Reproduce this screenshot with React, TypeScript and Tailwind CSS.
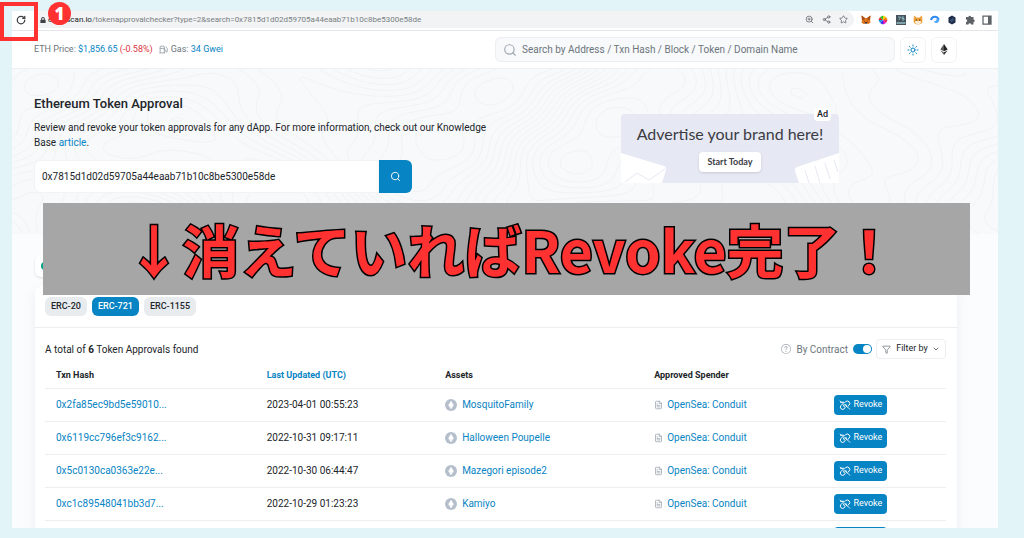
import { ChevronDown, FileText, Filter, Fuel, RotateCw, Search, Share2, Star, Sun, ZoomIn } from 'lucide-react';
import { FaLock } from 'react-icons/fa';
import { BsQuestionCircle } from 'react-icons/bs';

interface Approval {
  hash: string;
  updated: string;
  asset: string;
  spender: string;
}

const approvals: Approval[] = [
  { hash: '0x2fa85ec9bd5e59010...', updated: '2023-04-01 00:55:23', asset: 'MosquitoFamily', spender: 'OpenSea: Conduit' },
  { hash: '0x6119cc796ef3c9162...', updated: '2022-10-31 09:17:11', asset: 'Halloween Poupelle', spender: 'OpenSea: Conduit' },
  { hash: '0x5c0130ca0363e22e...', updated: '2022-10-30 06:44:47', asset: 'Mazegori episode2', spender: 'OpenSea: Conduit' },
  { hash: '0xc1c89548041bb3d7...', updated: '2022-10-29 01:23:23', asset: 'Kamiyo', spender: 'OpenSea: Conduit' }
];

const tokenTypes = ['ERC-20', 'ERC-721', 'ERC-1155'];

// Height map behind the topographic lines of the hero
function terrain(x: number, y: number) {
  return (
    Math.sin(x / 61 + Math.sin(y / 47) * 1.3) +
    Math.cos(y / 43 + Math.sin(x / 83) * 1.7) +
    0.5 * Math.sin((x + y) / 37) +
    0.2 * Math.cos((x - 2 * y) / 23)
  );
}

// Marching squares over the height map, one level after another
function contourPath(width: number, height: number, step: number) {
  let d = '';
  for (let level = -2.6; level <= 2.6; level += 0.32) {
    for (let x = 0; x < width; x += step) {
      for (let y = 0; y < height; y += step) {
        const corners = [
          [x, y],
          [x + step, y],
          [x + step, y + step],
          [x, y + step]
        ];
        const points: string[] = [];
        corners.forEach(([ax, ay], i) => {
          const [bx, by] = corners[(i + 1) % 4];
          const a = terrain(ax, ay) - level;
          const b = terrain(bx, by) - level;
          if (a > 0 !== b > 0) {
            const t = a / (a - b);
            points.push(`${(ax + (bx - ax) * t).toFixed(1)} ${(ay + (by - ay) * t).toFixed(1)}`);
          }
        });
        for (let i = 0; i + 1 < points.length; i += 2) {
          d += `M${points[i]}L${points[i + 1]}`;
        }
      }
    }
  }
  return d;
}

const contours = contourPath(986, 165, 5);

function UnlinkIcon() {
  return (
    <svg viewBox="0 0 24 20" className="h-[10px] w-3" fill="none" stroke="currentColor" strokeWidth="2" strokeLinecap="round">
      <path d="M2 2 22 18.5" strokeWidth="1.5" />
      <path d="M3 4.5h6.5" />
      <path d="M11 5.5 13 3.5a5 5 0 0 1 7 0 5 5 0 0 1 0 7L17.5 13" />
      <path d="M13.5 8.5q2 1 1.5 4" />
      <path d="M7 8 4 11a4.8 4.8 0 0 0 0 6.5 4.8 4.8 0 0 0 6.500 0L12.5 15.5" />
      <path d="M9 10.5q0 3 2.5 4" />
    </svg>
  );
}

function EthIcon() {
  return (
    <svg viewBox="0 0 24 24" className="h-3 w-3 shrink-0">
      <circle cx="12" cy="12" r="12" fill="#b5bfcc" />
      <path d="M12 3.5 17.5 12.5 12 20.5 6.5 12.5z" fill="#fff" />
      <path d="M7.5 13.5 12 16l4.5-2.5" fill="none" stroke="#dfe4ea" strokeWidth="1" />
    </svg>
  );
}

function Extensions() {
  return (
    <div className="flex w-[131px] items-center justify-between text-[#5f6368]">
      <svg viewBox="0 0 20 20" className="h-[10px] w-[10px]">
        <path d="M1 1l7 5h4l7-5-1 9 1 5-4 3-3-1H8l-3 1-4-3 1-5z" fill="#e2761b" />
        <path d="M1 1l7 5-2 4-4 0zM19 1l-7 5 2 4 4 0z" fill="#a9501c" />
        <path d="M8 14h4l1 3H7z" fill="#3a3033" />
        <path d="M5 11l3 1v2zM15 11l-3 1v2z" fill="#5c3a20" />
      </svg>
      <svg viewBox="0 0 20 20" className="h-[10px] w-[10px]">
        <path d="M10 10V1l6 3z" fill="#f7d000" />
        <path d="M10 10l6-6 3 6z" fill="#ff7a00" />
        <path d="M10 10h9l-3 6z" fill="#f0285a" />
        <path d="M10 10l6 6-6 3z" fill="#d312c9" />
        <path d="M10 10v9l-6-3z" fill="#3b2bea" />
        <path d="M10 10l-6 6-3-6z" fill="#129ce8" />
        <path d="M10 10H1l3-6z" fill="#e3262c" />
        <path d="M10 10L4 4l6-3z" fill="#28c52b" />
      </svg>
      <svg viewBox="0 0 20 20" className="h-[10px] w-[10px]">
        <path d="M0 0h20v20H0z" fill="#47545b" />
        <path d="M4 4h5L6 10M16 4h-4v3h4v3h-4" fill="none" stroke="#9fd3e0" strokeWidth="1.5" />
        <path d="M1 14h18v4H1z" fill="#7fa3ad" />
      </svg>
      <svg viewBox="0 0 20 20" className="h-[10px] w-[10px]">
        <path d="M2 1l5 4h6l5-4 1 11c0 4-4 7-9 7s-9-3-9-7z" fill="#f0a13a" />
        <path d="M4 13c2-3 4-1 6-1s4-2 6 1c1 3-3 6-6 6s-7-3-6-6z" fill="#fbe9d2" />
        <circle cx="6.5" cy="10" r="1.4" fill="#46362c" />
        <circle cx="13.5" cy="10" r="1.4" fill="#46362c" />
      </svg>
      <svg viewBox="0 0 20 20" className="h-[10px] w-[10px]">
        <path d="M2 10a8 8 0 0 1 15-2" fill="none" stroke="#2a86f0" strokeWidth="4" />
        <path d="M19 7c0 5-2 8-6 9-3 0-5-1-5-4 2 1 4 1 5-1l-3-1z" fill="#4aa3f7" />
      </svg>
      <svg viewBox="0 0 20 20" className="h-[10px] w-[10px]">
        <path d="M10 1l7 4v10l-7 4-7-4V5z" fill="#1c2b4a" />
        <path d="M6 12l7-6M8 14l6-5" stroke="#6f86ad" strokeWidth="1.3" />
      </svg>
      <svg viewBox="0 0 20 20" className="h-[10px] w-[10px]">
        <path d="M7 4a2.5 2.5 0 0 1 5 0h5v5a2.5 2.5 0 0 1 0 5v5h-5a2.5 2.5 0 0 0-5 0H2v-5a2.5 2.5 0 0 0 0-5V4z" fill="currentColor" />
      </svg>
      <svg viewBox="0 0 20 20" className="h-[10px] w-[10px]">
        <path d="M2 2h16v16H2z" fill="none" stroke="currentColor" strokeWidth="2.5" />
        <path d="M12 2h6v16h-6z" fill="currentColor" />
      </svg>
    </div>
  );
}

function BrowserBar() {
  return (
    <div className="flex h-5 shrink-0 items-start border-b border-[#e4e6e9] pr-[6px]">
      <button type="button" aria-label="Reload" className="flex h-[17px] w-[23px] items-center justify-center pr-[6px] text-[#3c4043]">
        <RotateCw className="h-[10px] w-[10px]" strokeWidth={3} />
      </button>
      <div className="flex h-[17px] flex-1 items-center rounded-r-full bg-[#f1f3f4] pl-[5px] pr-[6px] text-[8px] leading-[17px] text-[#7a7f84]">
        <FaLock className="mr-[2px] h-[6px] w-[6px] text-[#3c4043]" />
        <span className="text-[#202124]">etherscan.io</span>
        <span className="flex-1">/tokenapprovalchecker?type=2&amp;search=0x7815d1d02d59705a44eaab71b10c8be5300e58de</span>
        <div className="flex gap-2 text-[#5f6368]">
          <ZoomIn className="h-[9px] w-[9px]" strokeWidth={2} />
          <Share2 className="h-[9px] w-[9px]" strokeWidth={2} />
          <Star className="h-[9px] w-[9px]" strokeWidth={2} />
        </div>
      </div>
      <div className="flex h-[17px] items-center pl-[7px]">
        <Extensions />
      </div>
    </div>
  );
}

function Header() {
  return (
    <header className="flex h-[38px] shrink-0 items-center gap-[5px] border-b border-[#eef0f2] pl-[22px] pr-[41px] text-[9px] text-[#6c757d]">
      <div className="flex flex-1 items-center">
        <span>
          ETH Price: <a href="#price" className="text-[#0784c3]">$1,856.65</a> <span className="text-[#dc3545]">(-0.58%)</span>
        </span>
        <Fuel className="ml-[6px] mr-[3px] h-[9px] w-[9px] text-[#8b939b]" />
        <span>
          Gas: <a href="#gas" className="text-[#0784c3]">34 Gwei</a>
        </span>
      </div>
      <label className="flex h-[25px] w-[400px] items-center rounded-md border border-[#eceef1] bg-[#f8f9fa] pl-[7px]">
        <Search className="mr-[5px] h-[14px] w-[14px] text-[#a0a9b3]" strokeWidth={2} />
        <input
          type="text"
          aria-label="Search"
          placeholder="Search by Address / Txn Hash / Block / Token / Domain Name"
          className="flex-1 bg-transparent text-[10px] outline-none placeholder:text-[#6c757d]"
        />
      </label>
      <button type="button" aria-label="Theme" className="flex h-[26px] w-[26px] items-center justify-center rounded-md border border-[#f1f3f5]">
        <Sun className="h-3 w-3 text-[#0784c3]" />
      </button>
      <button type="button" aria-label="Network" className="flex h-[26px] w-[26px] items-center justify-center rounded-md border border-[#f1f3f5]">
        <svg viewBox="0 0 16 24" className="h-[11px] w-2">
          <path d="M8 0 0 12l8 4z" fill="#5a5a5a" />
          <path d="M8 0l8 12-8 4z" fill="#222" />
          <path d="M0 14l8 10V18z" fill="#6a6a6a" />
          <path d="M16 14 8 24V18z" fill="#2c2c2c" />
        </svg>
      </button>
    </header>
  );
}

function AdBanner() {
  return (
    <a href="#advertise" className="relative mt-5 flex h-[69px] w-[218px] flex-col items-center rounded bg-[#e6e8f3] pt-[10px] font-['Lato',sans-serif] text-[#3b3c43]">
      <svg viewBox="0 0 218 69" className="absolute inset-0 h-full w-full">
        <path d="M0 39 43 52q3 1 2 4L41 69H0z" fill="#fff" />
        <path d="M4 68 16 59 28 66 44 55" fill="none" stroke="#e6e8f3" strokeWidth="1" />
        <path d="M218 39 176 53q-3 1-2 4L178 69H218z" fill="#fff" />
        <path d="M184 56l4 13M194 52l5 17M204 49l5 16M213 46l4 12" stroke="#e6e8f3" strokeWidth="1" />
      </svg>
      <span className="relative text-base leading-5">Advertise your brand here!</span>
      <span className="relative mt-2 rounded-sm bg-white px-2 text-[9px] font-bold leading-5 shadow-sm">Start Today</span>
      <span className="absolute -top-[6px] right-2 rounded bg-white px-[3px] font-['Roboto',sans-serif] text-[9px] font-medium leading-[13px] text-[#212529]">Ad</span>
    </a>
  );
}

function Hero() {
  return (
    <section className="relative shrink-0 bg-[#f8f9fb]">
      <svg viewBox="0 0 986 165" preserveAspectRatio="xMidYMid slice" className="absolute inset-0 h-full w-full">
        <path d={contours} fill="none" stroke="#f1f3f5" strokeWidth="1" />
      </svg>
      <div className="relative flex justify-between pb-[41px] pl-[22px] pr-[159px] pt-[25px]">
        <div className="w-[455px]">
          <h1 className="text-[13px] font-medium leading-5">Ethereum Token Approval</h1>
          <p className="mt-[6px] text-[10px] leading-[15px]">
            Review and revoke your token approvals for any dApp. For more information, check out our Knowledge Base{' '}
            <a href="#article" className="text-[#0784c3]">article</a>.
          </p>
          <form className="mt-[10px] flex h-[33px] w-[378px]">
            <input
              type="text"
              aria-label="Address"
              defaultValue="0x7815d1d02d59705a44eaab71b10c8be5300e58de"
              className="min-w-0 flex-1 rounded-l-md border border-[#f1f3f5] bg-white pl-[7px] text-[10px] outline-none"
            />
            <button type="button" aria-label="Search address" className="flex w-[33px] items-center justify-center rounded-r-md bg-[#0784c3] text-white">
              <Search className="h-[11px] w-[11px]" />
            </button>
          </form>
        </div>
        <AdBanner />
      </div>
    </section>
  );
}

function RevokeButton() {
  return (
    <button type="button" className="flex h-5 w-[53px] items-center justify-center gap-[2px] rounded bg-[#0784c3] text-[9px] text-white">
      <UnlinkIcon />
      Revoke
    </button>
  );
}

function ApprovalTable() {
  return (
    <table className="w-full table-fixed text-left text-[10px]">
      <colgroup>
        <col className="w-[23.5%]" />
        <col className="w-[19.8%]" />
        <col className="w-[23.2%]" />
        <col className="w-[20%]" />
        <col />
      </colgroup>
      <thead>
        <tr className="h-[29px] border-b border-[#eceef1] text-[9px]">
          <th className="pl-[11px] pt-1 font-bold">Txn Hash</th>
          <th className="pl-[10px] pt-1 font-bold">
            <a href="#updated" className="text-[#0784c3]">Last Updated (UTC)</a>
          </th>
          <th className="pl-[10px] pt-1 font-bold">Assets</th>
          <th className="pl-[10px] pt-1 font-bold">Approved Spender</th>
          <th aria-label="Action" />
        </tr>
      </thead>
      <tbody>
        {approvals.map((row) => (
          <tr key={row.hash} className="h-[33px] border-b border-[#eceef1]">
            <td className="pl-[11px]">
              <a href="#txn" className="text-[#0784c3]">{row.hash}</a>
            </td>
            <td className="pl-[10px]">{row.updated}</td>
            <td className="pl-[10px]">
              <a href="#asset" className="flex items-center gap-[5px] text-[#0784c3]">
                <EthIcon />
                {row.asset}
              </a>
            </td>
            <td className="pl-[10px]">
              <a href="#spender" className="flex items-center gap-1 text-[#0784c3]">
                <FileText className="h-[10px] w-[9px] text-[#9aa3ad]" />
                {row.spender}
              </a>
            </td>
            <td className="pl-[10px]">
              <RevokeButton />
            </td>
          </tr>
        ))}
        <tr className="h-[33px]">
          <td colSpan={4} />
          <td className="pl-[10px]">
            <RevokeButton />
          </td>
        </tr>
      </tbody>
    </table>
  );
}

function ApprovalCard() {
  return (
    <div className="mt-[9px] rounded-lg bg-white shadow-[0_4px_12px_rgba(189,197,209,0.25)]">
      <div className="flex gap-[5px] border-b border-[#eceef1] px-[10px] pb-[11px] pt-[11px]">
        {tokenTypes.map((type) => (
          <button
            key={type}
            type="button"
            className={
              type === 'ERC-721'
                ? 'rounded-md bg-[#0784c3] px-[6px] text-[9px] font-medium leading-[19px] text-white'
                : 'rounded-md bg-[#e9ecef] px-[6px] text-[9px] font-medium leading-[19px]'
            }
          >
            {type}
          </button>
        ))}
      </div>
      <div className="pl-[10px] pr-[11px] pt-[11px]">
        <div className="flex h-5 items-center">
          <p className="flex-1 text-[10px]">
            A total of <b className="font-bold">6</b> Token Approvals found
          </p>
          <label className="flex items-center gap-[5px] text-[10px] text-[#6c757d]">
            <BsQuestionCircle className="h-[10px] w-[10px] text-[#a0a9b3]" />
            By Contract
            <input
              type="checkbox"
              defaultChecked
              className="relative h-[10px] w-[19px] appearance-none rounded-full bg-[#0784c3] after:absolute after:right-px after:top-px after:h-2 after:w-2 after:rounded-full after:bg-white"
            />
          </label>
          <button type="button" className="ml-1 flex h-5 w-[70px] items-center justify-center rounded border border-[#eceef1] text-[9px]">
            <Filter className="mr-[5px] h-[9px] w-[9px] text-[#6c757d]" />
            Filter by
            <ChevronDown className="ml-1 h-2 w-2" />
          </button>
        </div>
        <ApprovalTable />
      </div>
    </div>
  );
}

export default function App() {
  return (
    <div className="relative h-screen overflow-hidden bg-[#e2f4f7] pb-[10px] pl-3 pr-[26px] pt-[11px] font-['Roboto',sans-serif] text-[#212529]">
      <div className="relative flex h-full flex-col overflow-hidden bg-white">
        <BrowserBar />
        <Header />
        <Hero />
        <main className="flex-1 bg-[#fbfcfd] pl-[23px] pr-[41px] pt-[21px]">
          <div className="flex h-[22px] w-20 items-center rounded-md bg-white pl-[6px] shadow-sm">
            <span className="h-2 w-2 rounded-full bg-[#00a186]" />
          </div>
          <ApprovalCard />
        </main>
        <div className="absolute left-[31px] right-7 top-[192px] flex h-[92px] items-center justify-center bg-[#a6a6a6] pb-[2px] pl-[10px]">
          <p className="whitespace-nowrap font-['Noto_Sans_CJK_JP',sans-serif] text-[57px] font-bold leading-[88px] text-[#ff3131] [-webkit-text-stroke:3px_#000] [paint-order:stroke_fill]">
            ↓消えていればRevoke完了！
          </p>
        </div>
      </div>
      <div className="absolute left-0 top-[2px] h-[39px] w-[38px] border-4 border-[#ff3131]" />
      <div className="absolute left-12 top-[2px] flex h-[23px] w-[23px] items-center justify-center rounded-full bg-[#ff3131] font-['Open_Sans',sans-serif] text-[17px] font-extrabold text-white">
        1
      </div>
    </div>
  );
}
